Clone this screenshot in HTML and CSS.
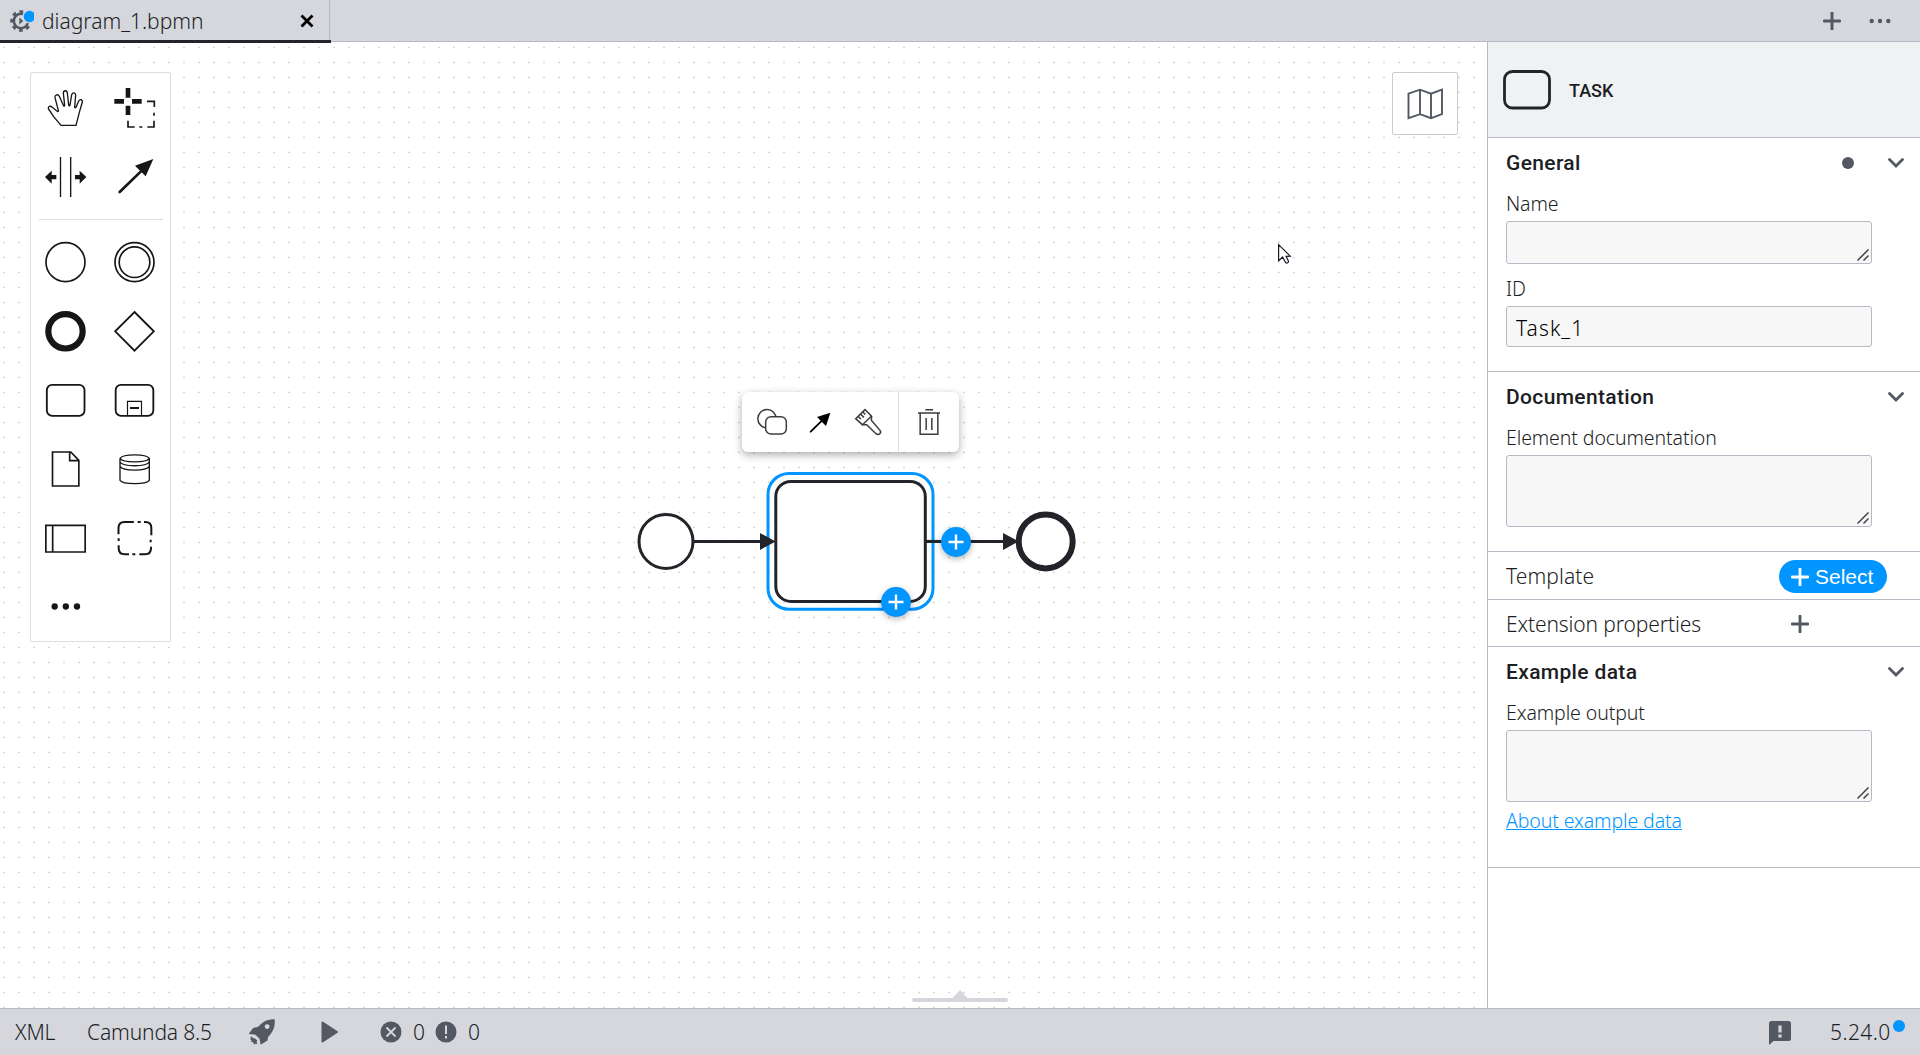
FILE: index.html
```html
<!DOCTYPE html>
<html lang="en">
<head>
<meta charset="utf-8">
<title>diagram_1.bpmn</title>
<link rel="stylesheet" href="styles.css">
</head>
<body>
<header class="tabbar">
  <div class="tab">
    <svg class="tab-icon" width="26" height="26" viewBox="8 8 26 26">
      <g fill="none" stroke="#535862">
        <circle cx="21" cy="21" r="7.2" stroke-width="2.6"/>
        <circle cx="21" cy="21" r="9.4" stroke-width="2.8" stroke-dasharray="3.7 3.683" stroke-dashoffset="1.8"/>
      </g>
      <path d="M19.3 17.5v7l4-3.5z" fill="#535862"/>
      <circle cx="29.5" cy="16.5" r="7" fill="#d5d7dd"/>
      <circle cx="29.5" cy="16.5" r="5.7" fill="#0095ff"/>
    </svg>
    <span class="tab-name">diagram_1.bpmn</span>
    <svg class="tab-close" width="14" height="14" viewBox="0 0 14 14"><path d="M1.5 1.5l11 11m0-11l-11 11" stroke="#000" stroke-width="2.8"/></svg>
  </div>
  <div class="tab-actions">
    <svg width="18" height="18" viewBox="0 0 18 18"><path d="M9 1.2v15.6M1.2 9h15.6" stroke="#535862" stroke-width="3" stroke-linecap="round"/></svg>
    <svg width="22" height="6" viewBox="0 0 22 6" fill="#535862"><circle cx="2.7" cy="3" r="2.2"/><circle cx="11" cy="3" r="2.2"/><circle cx="19.3" cy="3" r="2.2"/></svg>
  </div>
</header>

<main class="editor">
  <section class="canvas">
    <svg class="diagram" width="1487" height="966" viewBox="0 42 1487 966">
      <defs><pattern id="grid" x="3" y="46" width="15" height="15" patternUnits="userSpaceOnUse"><circle cx="1" cy="1.4" r=".95" fill="#d2d2d2"/></pattern></defs>
      <rect x="0" y="42" width="1487" height="966" fill="url(#grid)"/>
      <g fill="#fff" fill-opacity=".95" stroke="#22242a" stroke-width="3">
        <circle cx="666" cy="541.4" r="27"/>
        <path d="M694 541.4h68M926 541.4h80" fill="none"/>
        <rect x="775.8" y="481.4" width="149.5" height="120" rx="15"/>
        <circle cx="1045.7" cy="541.4" r="27" stroke-width="6"/>
      </g>
      <rect x="768" y="473.5" width="165" height="135.8" rx="21" fill="none" stroke="#0095ff" stroke-width="3"/>
      <path d="M760 533l15.7 8.4-15.7 8.5zM1003 533l15.7 8.4-15.7 8.5z" fill="#22242a"/>
      <path d="M926 541.4h12" stroke="#22242a" stroke-width="3"/>
      <path d="M1278.6 244.6v16.2l4-3.8 3 5.6c1.6 1 3.2 0 2.8-1.6l-2.4-4.7 4.2-.2z" fill="#fff" stroke="#1c1c28" stroke-width="1.2"/>
    </svg>

    <nav class="palette">
      <div class="palette-grid">
        <svg viewBox="93 219 207 207"><path d="M183 376l-22-26-16-24c-1-8 7-9 11-5l17 14c2 0 3-2 2-4l-10-38c-1-9 9-12 13-4l13 29c2 1 3 0 3-2l-4-37c1-9 11-9 12 0l4 36c1 3 3 3 4 0l5-31c3-8 12-7 12 2l-3 35c0 3 2 3 4 1l8-19c4-7 12-4 11 3l-9 31-10 39z"/></svg>
        <svg viewBox="300 219 207 207"><path d="M384 264v29M384 317v28M343 304h29M396 304h29" stroke-width="14"/><path d="M441 304h22v17M462 338v9M462 362v19h-20M427 381h-9M404 381h-20v-19" stroke-width="5"/></svg>
        <svg viewBox="93 426 207 207"><path d="M181.5 471v120M212 471v120"/><path class="solid" d="M135 531l20-19v13h14v13h-14v13zM259 531l-20-19v13h-14v13h14v13z"/></svg>
        <svg viewBox="300 426 207 207"><path d="M359 576l70-68" stroke-width="8" stroke-linecap="round"/><path class="solid" d="M460 477l-55 20 32 32z"/></svg>
      </div>
      <hr>
      <div class="palette-grid">
        <svg viewBox="93 81 207 207"><circle cx="196.5" cy="186.5" r="58.5" stroke-width="5"/></svg>
        <svg viewBox="300 81 207 207"><circle cx="403.5" cy="186.5" r="58.5" stroke-width="5"/><circle cx="403.5" cy="186.5" r="46" stroke-width="5"/></svg>
        <svg viewBox="93 288 207 207"><circle cx="196.5" cy="394" r="51.5" stroke-width="18.5"/></svg>
        <svg viewBox="300 288 207 207"><path d="M403.5 336l58 58-58 58-58-58z" stroke-width="5.500"/></svg>
        <svg viewBox="93 495 207 207"><rect x="140.5" y="554.5" width="113" height="93" rx="16" stroke-width="5.5"/></svg>
        <svg viewBox="300 495 207 207"><rect x="347" y="554.5" width="113" height="93" rx="16" stroke-width="5.5"/><path d="M382.5 646v-42h42v42" stroke-width="3.5"/><path d="M390 624h27" stroke-width="6"/></svg>
        <svg viewBox="93 12 207 207"><path d="M157.5 66h55l24 25v77h-79zM209 66v26h27" stroke-width="5"/></svg>
        <svg viewBox="300 12 207 207"><path d="M360 85v66c9 13 79 13 88 0v-66M360 85c9-14 79-14 88 0-9 14-79 14-88 0M360 96c9 15 79 15 88 0M360 109c9 15 79 15 88 0"/></svg>
        <svg viewBox="93 219 207 207"><path d="M137.5 286h118v80h-118zM158 286v80" stroke-width="5"/></svg>
        <svg viewBox="300 219 207 207"><path d="M355.5 313v-19q0-18 18-18h28M413 276h9M432 276h4q18 0 18 18v22M452 329v8M453 350v5q0 18-18 18h-17M406 373h-9M387 373h-13q-18 0-18-18v-9M356 333v-8" stroke-width="6"/></svg>
        <svg viewBox="93 426 207 207"><g class="solid"><circle cx="164" cy="529.5" r="9.5"/><circle cx="197.5" cy="529.5" r="9.5"/><circle cx="231" cy="529.5" r="9.5"/></g></svg>
      </div>
    </nav>

    <button class="minimap"><svg width="36" height="32" viewBox="0 0 36 32"><path d="M1.5 5.7L13 1.7l11 4 11-4v24.5l-11 4-11-4-11.5 4zM13 1.7v24.5M24 5.7v24.5" fill="none" stroke="#535862" stroke-width="1.9"/></svg></button>

    <div class="context-pad">
      <svg width="157" height="60" viewBox="366 36 471 180">
        <g fill="#fff" stroke="#3c3c3c" stroke-width="4.5"><circle cx="441" cy="116" r="27.5"/><rect x="437" y="110" width="62" height="52" rx="16"/></g>
        <path d="M572 155l43-42" stroke="#000" stroke-width="5.5" stroke-linecap="round"/><path d="M631 98l-40 13 27 27z" fill="#000"/>
        <g fill="none" stroke="#3c3c3c" stroke-width="4.5"><path d="M707 116l28-27 20 20-1 12 26 30c6 9-5 16-12 10l-28-27h-13z"/><path d="M726 136l28-27M714 109l9 8M721 102l11 10M728 96l8 7"/></g>
      </svg>
      <svg class="pad-delete" width="60" height="60" viewBox="837 36 180 180"><g fill="none" stroke="#3c3c3c" stroke-width="4.5"><path d="M916 89h23M894 99h66M900.5 99v64h53v-64M918.5 114v36M935.5 114v36"/></g></svg>
    </div>
    <button class="append append-right"><svg width="16" height="16" viewBox="0 0 16 16"><path d="M8 .5v15M.5 8h15" stroke="#fff" stroke-width="2.4"/></svg></button>
    <button class="append append-bottom"><svg width="16" height="16" viewBox="0 0 16 16"><path d="M8 .5v15M.5 8h15" stroke="#fff" stroke-width="2.4"/></svg></button>
    <svg class="drawer-handle" width="96" height="12" viewBox="0 0 96 12" fill="#d5d7dd"><rect y="8" width="96" height="4" rx="2"/><path d="M40 8.5l8-8.500 8 8.500z"/></svg>
  </section>

  <aside class="properties">
    <div class="element-header">
      <svg width="48" height="40" viewBox="0 0 48 40"><rect x="1.5" y="1.5" width="45" height="36.5" rx="8" fill="none" stroke="#22242a" stroke-width="2.8"/></svg>
      <span>TASK</span>
    </div>
    <section class="group">
      <h2><span>General</span><i class="dot"></i><svg class="chevron" width="16" height="10" viewBox="0 0 16 10"><path d="M1.5 1.5L8 8l6.500-6.500"/></svg></h2>
      <div class="field"><label>Name</label><div class="box short"><svg class="grip" width="12" height="12" viewBox="0 0 12 12"><path d="M.5 11.5l11-11M6.5 11.5l5-5"/></svg></div></div>
      <div class="field"><label>ID</label><input class="box" value="Task_1"></div>
    </section>
    <section class="group">
      <h2><span>Documentation</span><svg class="chevron" width="16" height="10" viewBox="0 0 16 10"><path d="M1.5 1.5L8 8l6.500-6.500"/></svg></h2>
      <div class="field"><label>Element documentation</label><div class="box tall"><svg class="grip" width="12" height="12" viewBox="0 0 12 12"><path d="M.5 11.5l11-11M6.5 11.5l5-5"/></svg></div></div>
    </section>
    <section class="row template"><span>Template</span><button class="select"><svg width="18" height="18" viewBox="0 0 18 18"><path d="M9 1v16M1 9h16" stroke="#fff" stroke-width="2.8" stroke-linecap="round"/></svg>Select</button></section>
    <section class="row extension"><span>Extension properties</span><svg width="18" height="18" viewBox="0 0 18 18"><path d="M9 1v16M1 9h16" stroke="#535862" stroke-width="2.8" stroke-linecap="round"/></svg></section>
    <section class="group example">
      <h2><span>Example data</span><svg class="chevron" width="16" height="10" viewBox="0 0 16 10"><path d="M1.5 1.5L8 8l6.500-6.500"/></svg></h2>
      <div class="field"><label>Example output</label><div class="box tall"><svg class="grip" width="12" height="12" viewBox="0 0 12 12"><path d="M.5 11.5l11-11M6.5 11.5l5-5"/></svg></div></div>
      <a href="#">About example data</a>
    </section>
  </aside>
</main>

<footer class="statusbar">
  <span class="xml">XML</span>
  <span class="engine">Camunda 8.5</span>
  <svg class="rocket" width="26" height="26" viewBox="748 132 76 76" fill="#535862"><path fill-rule="evenodd" d="M823 133c2 22-5 38-19 51l-2 11-20 12-3-17-12-12-20-2 13-18 15-3c13-15 26-22 48-22zM801 147a7 7 0 1 0 .1 0z"/><path d="M754 182l6 6 5 0 7 7-2 5 3 5-8-1-2 4-3-8-7-2 3-4-4-3z"/></svg>
  <svg class="play" width="18" height="22" viewBox="0 0 18 22"><path d="M1.5 1.5v19L16 11z" fill="#535862" stroke="#535862" stroke-width="2" stroke-linejoin="round"/></svg>
  <svg class="errors" width="22" height="22" viewBox="0 0 22 22"><circle cx="11" cy="11" r="10.5" fill="#535862"/><path d="M6.5 6.5l9 9m0-9l-9 9" stroke="#d5d7dd" stroke-width="1.8"/></svg>
  <span class="count">0</span>
  <svg class="warnings" width="22" height="22" viewBox="0 0 22 22"><circle cx="11" cy="11" r="10.5" fill="#535862"/><path d="M11 4.500v8.500M11 15v2.500" stroke="#d5d7dd" stroke-width="2"/></svg>
  <span class="count">0</span>
  <svg class="feedback" width="22" height="24" viewBox="0 0 22 24"><path d="M2.5 0h17Q22 0 22 2.500v15Q22 20 19.500 20H4.500L0 24V2.500Q0 0 2.500 0z" fill="#535862"/><path d="M11 4.500v7M11 13.500v3" stroke="#d5d7dd" stroke-width="3.200"/></svg>
  <span class="version">5.24.0<i></i></span>
</footer>
</body>
</html>
```
FILE: styles.css
```css
* { box-sizing: border-box; }
body {
  margin: 0;
  width: 1920px;
  height: 1055px;
  overflow: hidden;
  display: flex;
  flex-direction: column;
  font: 300 21px "Noto Sans", "Open Sans", sans-serif;
  color: #1c1e24;
  background: #fff;
}
svg { display: block; flex: none; }
button { font: inherit; padding: 0; border: 0; }

.tabbar {
  height: 42px;
  display: flex;
  justify-content: space-between;
  background: #d5d7dd;
  border-bottom: 1px solid #b8bac3;
}
.tab {
  position: relative;
  width: 330px;
  height: 41px;
  padding: 0 15px 0 8px;
  display: flex;
  align-items: center;
  border-right: 1px solid #b8bac3;
}
.tab::after {
  content: "";
  position: absolute;
  z-index: 2;
  left: 0;
  top: 40px;
  width: 331px;
  height: 3px;
  background: #22242a;
}
.tab-name { margin-left: 8px; line-height: 40px; }
.tab-close { margin-left: auto; }
.tab-actions { display: flex; align-items: center; gap: 28px; padding-right: 29px; }

.editor { height: 966px; display: flex; }
.canvas { position: relative; width: 1487px; }
.diagram { position: absolute; left: 0; top: 0; }
.palette {
  position: absolute;
  left: 30px;
  top: 30px;
  width: 141px;
  height: 570px;
  background: #fff;
  border: 1px solid #ddd;
  border-radius: 2px;
}
.palette hr { margin: 8px 7px 7px 8px; height: 1px; border: 0; background: #ddd; }
.palette-grid { display: grid; grid-template-columns: 69px 69px; grid-auto-rows: 69px; }
.palette-grid svg { width: 69px; height: 69px; fill: none; stroke: #161616; stroke-width: 4; }
.palette-grid .solid { fill: #161616; stroke: none; }
.minimap {
  position: absolute;
  left: 1392px;
  top: 30px;
  width: 66px;
  height: 63px;
  display: flex;
  align-items: center;
  justify-content: center;
  background: rgba(255, 255, 255, .95);
  border: 1px solid #ccc;
  border-radius: 2px;
}
.context-pad {
  position: absolute;
  left: 742px;
  top: 350px;
  width: 217px;
  height: 60px;
  display: flex;
  background: #fff;
  border-radius: 6px;
  box-shadow: 0 3px 8px rgba(0, 0, 0, .32);
}
.pad-delete { box-shadow: -1px 0 #ddd; }
.append {
  position: absolute;
  width: 30px;
  height: 30px;
  display: flex;
  align-items: center;
  justify-content: center;
  border-radius: 50%;
  background: #0095ff;
  box-shadow: 0 2px 6px rgba(0, 0, 0, .3);
}
.append-right { left: 941px; top: 485px; }
.append-bottom { left: 881px; top: 545px; }
.drawer-handle { position: absolute; left: 912px; top: 948px; }

.properties { width: 433px; border-left: 1px solid #b9b9c6; background: #fff; }
.element-header {
  height: 96px;
  padding: 1px 0 0 15px;
  display: flex;
  align-items: center;
  gap: 18px;
  background: #f0f1f3;
  border-bottom: 1px solid #b9b9c6;
}
.element-header span { font: 500 18px Roboto, sans-serif; }
.group { padding: 0 0 24px 18px; border-bottom: 1px solid #b9b9c6; }
.group h2 {
  height: 49px;
  margin: 0 0 2px;
  padding-right: 16px;
  display: flex;
  align-items: center;
  font: 500 21px Roboto, sans-serif;
  letter-spacing: .35px;
}
.group h2 span { margin-right: auto; }
.dot { width: 12px; height: 12px; margin-right: 34px; border-radius: 50%; background: #535862; }
.chevron { fill: none; stroke: #535862; stroke-width: 2.8; stroke-linecap: round; }
.field + .field { margin-top: 10px; }
.field label, .group a { display: block; font-size: 19.5px; line-height: 29px; letter-spacing: -.1px; }
.field label { margin-bottom: 3px; }
.box {
  display: flex;
  align-items: flex-end;
  justify-content: flex-end;
  width: 366px;
  height: 41px;
  padding: 0 2px 2px;
  background: #f7f7f8;
  border: 1px solid #b9b9c6;
  border-radius: 3px;
}
input.box { padding: 2px 9px 0; font: inherit; color: #000; letter-spacing: 1.1px; }
.short { height: 43px; }
.tall { height: 72px; }
.grip { fill: none; stroke: #444; stroke-width: 1.5; }
.row { display: flex; align-items: center; padding-left: 18px; border-bottom: 1px solid #b9b9c6; }
.template { height: 48px; }
.template span { width: 273px; letter-spacing: .1px; }
.extension { height: 47px; padding-top: 2px; }
.extension span { width: 285px; letter-spacing: -.12px; }
.select {
  width: 108px;
  height: 33px;
  margin-top: 2px;
  padding-left: 12px;
  display: flex;
  align-items: center;
  gap: 6px;
  border-radius: 17px;
  background: #0095ff;
  color: #fff;
  font: 400 21px "Liberation Sans", sans-serif;
}
.example { padding-bottom: 32px; }
.group a { margin-top: 4px; color: #0095ff; }

.statusbar {
  height: 47px;
  display: flex;
  align-items: center;
  background: #d5d7dd;
  border-top: 1px solid #b8bac3;
}
.xml { width: 72px; padding-left: 15px; letter-spacing: -.1px; }
.engine { width: 161px; padding-left: 15px; letter-spacing: -.15px; white-space: nowrap; }
.rocket { margin-left: 16px; }
.play { margin-left: 46px; }
.errors { margin-left: 41px; }
.count { width: 22px; margin-left: 11px; }
.feedback { margin: 2px 0 0 auto; }
.version { display: flex; align-items: center; width: 129px; padding-left: 39px; letter-spacing: .4px; }
.version i { width: 12px; height: 12px; margin: -13px 0 0 2px; border-radius: 50%; background: #0095ff; }
```
